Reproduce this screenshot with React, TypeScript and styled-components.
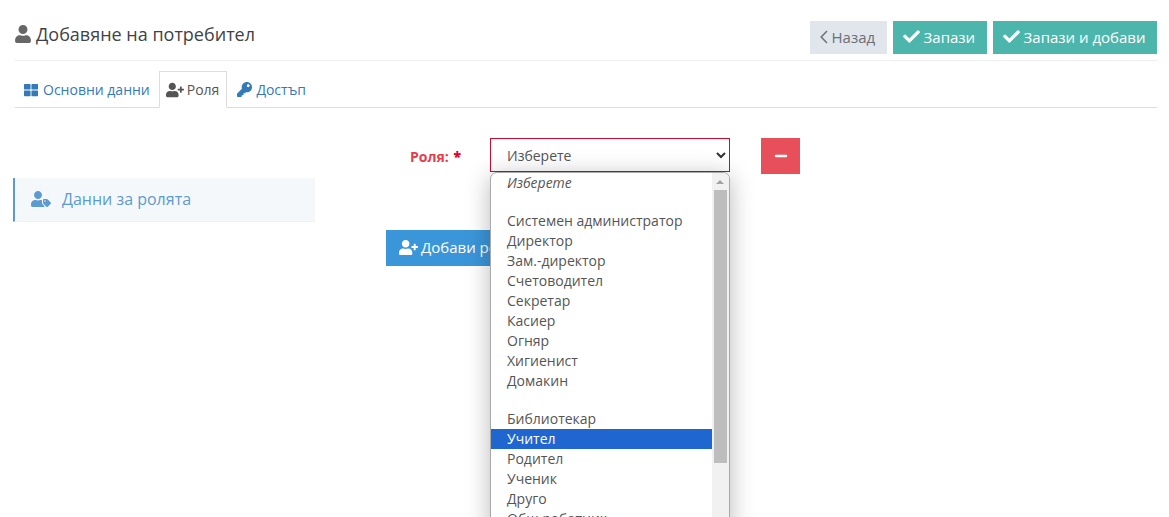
import React from "react";
import styled, { createGlobalStyle } from "styled-components";
import { FaCheck, FaKey, FaMinus, FaThLarge, FaUser, FaUserPlus, FaUserTag } from "react-icons/fa";

const GlobalStyle = createGlobalStyle`
  html, body {
    margin: 0;
    height: 517px;
    overflow: hidden;
    background: #fff;
    font-family: "Open Sans", sans-serif;
  }
  * { box-sizing: border-box; }
`;

const Page = styled.div`
  width: 1169px;
  height: 517px;
  padding: 21px 12px 0 15px;
  overflow: hidden;
`;

const Header = styled.header`
  display: flex;
  justify-content: space-between;
  align-items: flex-start;
  height: 40px;
  border-bottom: 1px solid #eeeeee;
`;

const Title = styled.h1`
  display: flex;
  align-items: center;
  gap: 5px;
  margin: 0;
  height: 26px;
  font-size: 18px;
  font-weight: 400;
  color: #3f4347;
  svg { width: 16px; height: 18px; color: #676767; }
`;

const Actions = styled.div`
  display: flex;
  gap: 6px;
`;

const ActionButton = styled.button<{ $kind: "back" | "save" }>`
  display: flex;
  align-items: center;
  gap: ${(p) => (p.$kind === "back" ? "3px" : "4px")};
  height: 33px;
  padding: 0 11.5px 2px 10px;
  border: 0;
  font-family: inherit;
  font-size: 15px;
  color: ${(p) => (p.$kind === "back" ? "#6b6f76" : "#ffffff")};
  background: ${(p) => (p.$kind === "back" ? "#e1e5ec" : "#4db6ac")};
  svg {
    width: ${(p) => (p.$kind === "back" ? "8px" : "17px")};
    height: ${(p) => (p.$kind === "back" ? "16px" : "17px")};
  }
`;

const Tabs = styled.nav`
  display: flex;
  height: 37px;
  margin-top: 10px;
  border-bottom: 1px solid #dddddd;
`;

const Tab = styled.a<{ $active?: boolean }>`
  display: flex;
  align-items: center;
  gap: ${(p) => (p.$active ? "3px" : "4px")};
  height: 37px;
  padding: ${(p) => (p.$active ? "0 7px 0 6px" : "0 8px")};
  margin-right: ${(p) => (p.$active ? "1px" : "0")};
  font-size: 14px;
  color: ${(p) => (p.$active ? "#555555" : "#337ab7")};
  background: ${(p) => (p.$active ? "#ffffff" : "transparent")};
  border: 1px solid ${(p) => (p.$active ? "#dddddd" : "transparent")};
  border-bottom-color: ${(p) => (p.$active ? "#ffffff" : "transparent")};
  svg { font-size: ${(p) => (p.$active ? "18px" : "15px")}; }
`;

const GridIcon = styled(FaThLarge)`
  && { width: 14px; height: 14px; }
  margin-right: 1px;
`;

const Body = styled.div`
  display: flex;
`;

const Sidebar = styled.aside`
  flex: 0 0 302px;
  height: 44px;
  margin: 70px 0 0 -2px;
  padding: 0 0 2px 16px;
  display: flex;
  align-items: center;
  gap: 11px;
  font-size: 16px;
  color: #5c9bd1;
  background: #f5f8fb;
  border-left: 2px solid #5c9bd1;
  border-bottom: 1px solid #eef1f5;
  svg { font-size: 20px; }
`;

const Form = styled.div`
  padding: 30px 0 0 71px;
`;

const RoleRow = styled.div`
  display: flex;
  align-items: flex-start;
`;

const RoleLabel = styled.label`
  flex: 0 0 75px;
  padding-top: 9px;
  text-align: right;
  font-size: 14px;
  font-weight: 700;
  color: #e73d4a;
  b { margin-left: 1px; color: #e7002a; }
`;

const SelectWrap = styled.div`
  position: relative;
  width: 240px;
  margin-left: 29px;
`;

const SelectBox = styled.div`
  display: flex;
  align-items: center;
  justify-content: space-between;
  height: 34px;
  padding: 0 3px 0 16px;
  font-size: 14px;
  color: #555555;
  background: #fff;
  border: 1px solid #cf0a2c;
  svg { width: 10px; height: 10px; color: #333; }
`;

const RemoveButton = styled.button`
  display: flex;
  align-items: center;
  justify-content: center;
  width: 39px;
  height: 36px;
  margin-left: 31px;
  border: 0;
  color: #fff;
  background: #e7505a;
  svg { font-size: 14px; }
`;

const AddButton = styled.button`
  display: flex;
  align-items: center;
  gap: 3px;
  width: 160px;
  height: 36px;
  margin-top: 56px;
  padding: 0 13px 2px;
  border: 0;
  font-family: inherit;
  font-size: 15px;
  white-space: nowrap;
  color: #fff;
  background: #3b96d9;
  svg { font-size: 19px; }
`;

const Dropdown = styled.div`
  position: absolute;
  top: 34px;
  left: 0;
  display: flex;
  width: 240px;
  height: 360px;
  overflow: hidden;
  background: #fff;
  border: 1px solid #a9a9a9;
  border-radius: 7px 7px 0 0;
  box-shadow: 0 4px 24px rgba(0, 0, 0, 0.28);
`;

const OptionList = styled.ul`
  flex: 1;
  margin: 0;
  padding: 0;
  list-style: none;
`;

const Option = styled.li<{ $selected?: boolean; $placeholder?: boolean }>`
  height: 20px;
  padding-left: 16px;
  font-size: 14px;
  line-height: 19px;
  font-style: ${(p) => (p.$placeholder ? "italic" : "normal")};
  color: ${(p) => (p.$selected ? "#ffffff" : "#555555")};
  background: ${(p) => (p.$selected ? "#1f66d0" : "transparent")};
`;

const Spacer = styled.li`
  height: 18px;
`;

const Scrollbar = styled.div`
  position: relative;
  flex: 0 0 17px;
  padding: 17px 2px 0;
  background: #f1f1f1;
  &::before {
    content: "";
    position: absolute;
    top: 7px;
    left: 4px;
    border: 4px solid transparent;
    border-top: 0;
    border-bottom: 4px solid #a3a3a3;
  }
`;

const ScrollThumb = styled.div`
  height: 273px;
  background: #bdbdbd;
`;

const firstGroup = ["Системен администратор", "Директор", "Зам.-директор", "Счетоводител", "Секретар", "Касиер", "Огняр", "Хигиенист", "Домакин"];
const secondGroup = ["Библиотекар", "Учител", "Родител", "Ученик", "Друго", "Общ работник"];

export default function App() {
  return (
    <Page>
      <GlobalStyle />
      <Header>
        <Title>
          <FaUser />
          Добавяне на потребител
        </Title>
        <Actions>
          <ActionButton $kind="back">
            <svg viewBox="0 0 8 16" fill="none" stroke="currentColor" strokeWidth="1.5">
              <path d="M7 2L1.2 8 7 14" />
            </svg>
            Назад
          </ActionButton>
          <ActionButton $kind="save">
            <FaCheck />
            Запази
          </ActionButton>
          <ActionButton $kind="save">
            <FaCheck />
            Запази и добави
          </ActionButton>
        </Actions>
      </Header>
      <Tabs>
        <Tab>
          <GridIcon />
          Основни данни
        </Tab>
        <Tab $active>
          <FaUserPlus />
          Роля
        </Tab>
        <Tab>
          <FaKey />
          Достъп
        </Tab>
      </Tabs>
      <Body>
        <Sidebar>
          <FaUserTag />
          Данни за ролята
        </Sidebar>
        <Form>
          <RoleRow>
            <RoleLabel>
              Роля: <b>*</b>
            </RoleLabel>
            <SelectWrap>
              <SelectBox>
                Изберете
                <svg viewBox="0 0 10 10" fill="none" stroke="currentColor" strokeWidth="2">
                  <path d="M1 3l4 4 4-4" />
                </svg>
              </SelectBox>
              <Dropdown>
                <OptionList>
                  <Option $placeholder>Изберете</Option>
                  <Spacer />
                  {firstGroup.map((name) => (
                    <Option key={name}>{name}</Option>
                  ))}
                  <Spacer />
                  {secondGroup.map((name) => (
                    <Option key={name} $selected={name === "Учител"}>
                      {name}
                    </Option>
                  ))}
                </OptionList>
                <Scrollbar>
                  <ScrollThumb />
                </Scrollbar>
              </Dropdown>
            </SelectWrap>
            <RemoveButton>
              <FaMinus />
            </RemoveButton>
          </RoleRow>
          <AddButton>
            <FaUserPlus />
            Добави роля
          </AddButton>
        </Form>
      </Body>
    </Page>
  );
}
